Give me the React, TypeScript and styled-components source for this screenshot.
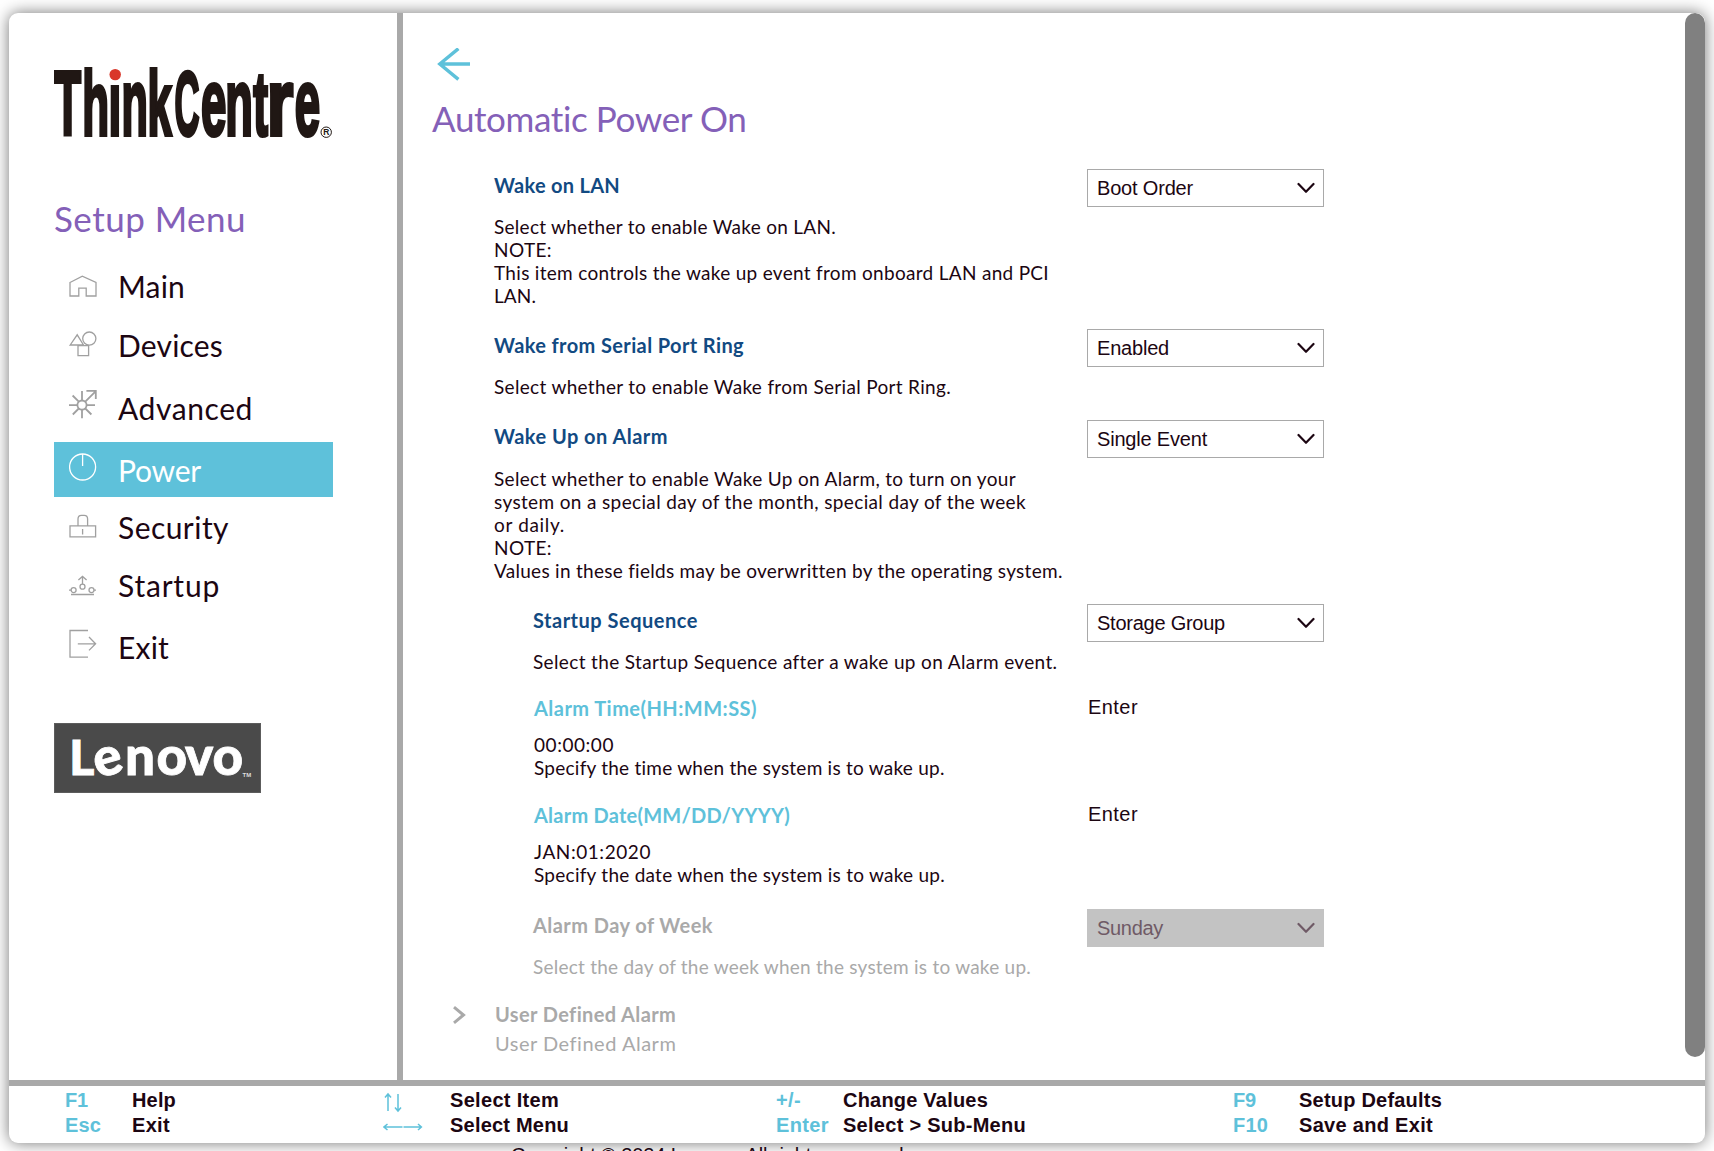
import React, { useLayoutEffect, useRef, useState } from "react";
import styled, { createGlobalStyle, css } from "styled-components";

const Global = createGlobalStyle`
  * { box-sizing: border-box; }
  html, body { margin: 0; height: 1151px; overflow: hidden; background: #fff; }
`;

const cyan = "#5ec1da";
const grey = "#a9a9a9";
const ink = "#1c0612";
const grotesk = `Lato, "Open Sans", sans-serif`;
const arial = `"Liberation Sans", Arial, sans-serif`;

/* Window frame */
const Page = styled.div`
  height: 1151px;
  padding: 13px 9px 0;
  overflow: hidden;
  font-family: ${grotesk};
  color: ${ink};
`;
const Window = styled.div`
  width: 1696px;
  height: 1130px;
  border-radius: 9px;
  background: #fff;
  box-shadow: 0 0 16px rgba(0, 0, 0, 0.55);
  display: flex;
  flex-direction: column;
  overflow: hidden;
`;
const Body = styled.div`
  display: flex;
  height: 1067px;
`;
const Sidebar = styled.aside`
  width: 394px;
  flex: none;
  border-right: 6px solid ${grey};
  padding: 46px 0 0 45px;
`;
const Content = styled.main`
  flex: 1;
  padding: 35px 0 0 29px;
`;
const ScrollTrack = styled.div`
  width: 20px;
  flex: none;
`;
const ScrollThumb = styled.div`
  height: 1044px;
  border-radius: 10px;
  background: #808080;
`;

/* Text set to a fixed measure by adjusting its tracking */
const Run = styled.span`
  display: inline-block;
  justify-self: start;
  white-space: pre;
`;
function Fit({ w, children }: { w: number; children: string }) {
  const ref = useRef<HTMLSpanElement>(null);
  const [track, setTrack] = useState(0);
  useLayoutEffect(() => {
    const natural = ref.current!.getBoundingClientRect().width;
    setTrack((w - natural) / children.length);
  }, [w, children]);
  return <Run ref={ref} style={{ letterSpacing: track }}>{children}</Run>;
}

/* Sidebar */
const BrandLogo = styled.svg`
  display: block;
  width: 285px;
  height: 90px;
`;
const MenuTitle = styled.h1`
  margin: 44px 0 0;
  height: 50px;
  font-size: 35px;
  line-height: 50px;
  font-weight: 400;
  color: #8460b8;
`;
const Nav = styled.nav`
  width: 279px;
  margin-top: 15px;
`;
const NavItem = styled.a<{ $h: number; $on?: boolean }>`
  display: flex;
  align-items: center;
  height: ${(p) => p.$h}px;
  padding-left: 15px;
  gap: 19px;
  font-size: 30px;
  line-height: 36px;
  ${(p) => p.$on && css`background: ${cyan}; color: #fff;`}
`;
const NavLabel = styled.span<{ $on?: boolean }>`
  padding-bottom: ${(p) => (p.$on ? 0 : 2)}px;
`;
const NavIcon = styled.svg<{ $lift: number; $on?: boolean }>`
  width: 30px;
  height: 30px;
  flex: none;
  margin-bottom: ${(p) => p.$lift * 2}px;
  fill: none;
  stroke: ${(p) => (p.$on ? "#fff" : "#a0a0a0")};
  stroke-width: 1.3;
`;
const LenovoBadge = styled.svg`
  display: block;
  width: 207px;
  height: 70px;
  margin-top: 41px;
  background: #4a4a4a;
  border: 1px solid #5c5c5c;
`;

/* Content */
const BackIcon = styled.svg`
  display: block;
  width: 34px;
  height: 34px;
  margin: 0 0 0 5px;
  fill: none;
  stroke: ${cyan};
  stroke-width: 3.4;
`;
const PageTitle = styled.h2`
  margin: 11px 0 0;
  height: 52px;
  font-size: 35px;
  line-height: 50px;
  font-weight: 400;
  color: #8460b8;
`;
const Rows = styled.div`
  display: flex;
  flex-direction: column;
  padding-top: 24px;
`;
const Row = styled.section<{ $gap?: number; $indent?: boolean }>`
  display: grid;
  grid-template-columns: ${(p) => (p.$indent ? 554 : 593)}px 237px;
  align-items: start;
  margin: ${(p) => p.$gap ?? 22}px 0 0 ${(p) => (p.$indent ? 101 : 62)}px;
`;
const Detail = styled.div<{ $nudge?: boolean }>`
  padding-left: ${(p) => (p.$nudge ? 1 : 0)}px;
`;
const Name = styled.h3<{ $tone: string; $flush?: boolean }>`
  margin: ${(p) => (p.$flush ? 0 : 3)}px 0 0;
  height: 24px;
  font-size: 20px;
  line-height: 26px;
  font-weight: 700;
  color: ${(p) => p.$tone};
`;
const Help = styled.p<{ $gap?: number; $dim?: boolean }>`
  margin: ${(p) => p.$gap ?? 19}px 0 0;
  font-size: 19px;
  line-height: 23px;
  color: ${(p) => (p.$dim ? grey : ink)};
`;
const HelpLine = styled.span`
  display: block;
  height: 23px;
`;
const Dropdown = styled.div<{ $off?: boolean }>`
  display: flex;
  align-items: center;
  justify-content: space-between;
  height: 38px;
  padding: 0 8px 0 9px;
  border: 1px solid ${(p) => (p.$off ? "#c3c3c3" : grey)};
  background: ${(p) => (p.$off ? "#c3c3c3" : "#fff")};
  color: ${(p) => (p.$off ? "#6f5a66" : ink)};
  font: 20px/36px ${arial};
`;
const Chevron = styled.svg`
  width: 18px;
  height: 12px;
  fill: none;
  stroke: currentColor;
  stroke-width: 2.2;
  stroke-linecap: round;
  stroke-linejoin: round;
`;
const EnterLink = styled.span`
  padding-left: 1px;
  font: 20px/24px ${arial};
`;
const SubMenu = styled.div`
  display: grid;
  grid-template-columns: 42px auto;
  margin: 24px 0 0 21px;
  color: ${grey};
`;
const SubArrow = styled.svg`
  width: 16px;
  height: 20px;
  margin: 3px 0 0 -1px;
  fill: none;
  stroke: ${grey};
  stroke-width: 3;
`;
const SubTitle = styled(Name)`
  line-height: 24px;
`;
const SubHelp = styled.div`
  margin-top: 5px;
  height: 24px;
  font-size: 20px;
  line-height: 24px;
`;

/* Footer */
const Footer = styled.footer`
  display: grid;
  grid-template-columns: 318px 393px 457px auto;
  height: 63px;
  border-top: 6px solid ${grey};
  padding: 2px 0 0 56px;
  font: 700 20px/25px ${arial};
`;
const Keys = styled.div<{ $key: number }>`
  display: grid;
  grid-template-columns: ${(p) => p.$key}px auto;
  grid-auto-rows: 25px;
  align-content: start;
`;
const Key = styled.span`
  color: ${cyan};
`;
const KeyArrows = styled.svg`
  width: 42px;
  height: 25px;
  fill: none;
  stroke: ${cyan};
  stroke-width: 1.5;
`;
const Copyright = styled.div`
  padding: 0 0 0 502px;
  font: 20px/24px ${arial};
`;

/* letter, x, advance, size */
const glyphs: [string, number, number, number][] = [
  ["T", 0.3, 26.8, 91], ["h", 28.2, 26.8, 91], ["i", 54.6, 12.8, 91], ["n", 67.4, 26.4, 94.5], ["k", 93.6, 24.2, 91],
  ["C", 120.6, 25, 91], ["e", 147, 25.4, 94.5], ["n", 171.2, 27.6, 94.5], ["t", 199.2, 14.8, 91], ["r", 212.8, 26.5, 94.5], ["e", 240.8, 25.4, 94.5],
];

const icons = {
  main: <path d="M1 7.5 13.3 1.2 27 7.5V21H17.2V13.2H9.8V21H1Z" transform="translate(0 3)" />,
  devices: (
    <g transform="translate(0 2)">
      <path d="M1.2 14 8.2 3.8 14.5 14Z" /><circle cx="20.3" cy="7.6" r="6.6" /><path d="M9 14.6H19.6V24.6H9Z" />
    </g>
  ),
  advanced: (
    <g strokeWidth="1.8" transform="translate(0 -.5)">
      <circle cx="13" cy="15.6" r="4.6" />
      <path d="M13 1.5V11M13 20.2V28.8M0 15.6H8.4M17.6 15.6H26M3.6 6 9.8 12.2M9.8 19 3.8 25M16.3 19 22.4 25M16.3 12.2 26.6 1.8M17.4 1.4H26.8V9.4" />
    </g>
  ),
  power: <><circle cx="13.6" cy="15" r="13" /><path d="M13.6 2V14" /></>,
  security: (
    <g transform="translate(0 2.5)">
      <path d="M1 11.4H26.6V22.4H1ZM9 11.4V4.6Q9 .8 12.4 .8H15.2Q18.6 .8 18.6 4.6V11.4M13.6 14.4V20" />
    </g>
  ),
  startup: (
    <g transform="translate(0 4.5)">
      <circle cx="13.5" cy="11.2" r="2.5" /><circle cx="4.6" cy="14.6" r="2.5" /><circle cx="22.5" cy="14.6" r="2.5" />
      <path d="M13.5 8.7V1M9.4 4.6 13.5 .9 17.6 4.6M0 14.6H2M25 14.6H27M2 19H25" />
    </g>
  ),
  exit: <path d="M19 1.5H1V28.2H19M8.8 14.8H26.4M20 8 26.6 14.8 20 21.4" />,
};

const nav: { icon: keyof typeof icons; label: string; h: number; lift: number; w: number; on?: boolean }[] = [
  { icon: "main", label: "Main", h: 58, lift: 0.5, w: 67 },
  { icon: "devices", label: "Devices", h: 59, lift: 2, w: 105 },
  { icon: "advanced", label: "Advanced", h: 67, lift: 4, w: 135 },
  { icon: "power", label: "Power", h: 55, lift: 2.5, w: 83, on: true },
  { icon: "security", label: "Security", h: 61, lift: 1, w: 111 },
  { icon: "startup", label: "Startup", h: 55, lift: -0.5, w: 102 },
  { icon: "exit", label: "Exit", h: 69, lift: 3.5, w: 51 },
];

type Line = [string, number];
interface Setting {
  name: Line;
  help: Line[];
  value?: Line;
  indent?: boolean;
  off?: boolean;
  gap?: number;
  helpGap?: number;
}
const settings: Setting[] = [
  {
    name: ["Wake on LAN", 126], gap: 0, value: ["Boot Order", 96],
    help: [["Select whether to enable Wake on LAN.", 342], ["NOTE:", 58], ["This item controls the wake up event from onboard LAN and PCI", 555], ["LAN.", 42]],
  },
  { name: ["Wake from Serial Port Ring", 250], value: ["Enabled", 72], help: [["Select whether to enable Wake from Serial Port Ring.", 457]] },
  {
    name: ["Wake Up on Alarm", 174], value: ["Single Event", 110], helpGap: 20,
    help: [["Select whether to enable Wake Up on Alarm, to turn on your", 522], ["system on a special day of the month, special day of the week", 532], ["or daily.", 71], ["NOTE:", 58], ["Values in these fields may be overwritten by the operating system.", 568]],
  },
  { name: ["Startup Sequence", 165], indent: true, value: ["Storage Group", 128], help: [["Select the Startup Sequence after a wake up on Alarm event.", 524]] },
  { name: ["Alarm Time(HH:MM:SS)", 223], indent: true, helpGap: 14, help: [["00:00:00", 80], ["Specify the time when the system is to wake up.", 411]] },
  { name: ["Alarm Date(MM/DD/YYYY)", 256], indent: true, gap: 23, helpGap: 14, help: [["JAN:01:2020", 117], ["Specify the date when the system is to wake up.", 411]] },
  { name: ["Alarm Day of Week", 180], indent: true, off: true, gap: 23, value: ["Sunday", 66], help: [["Select the day of the week when the system is to wake up.", 498]] },
];

function SettingRow({ s }: { s: Setting }) {
  const tone = s.off ? grey : s.value ? "#124a82" : cyan;
  return (
    <Row $gap={s.gap} $indent={s.indent}>
      <Detail $nudge={!s.value}>
        <Name $tone={tone} $flush={!s.value}><Fit w={s.name[1]}>{s.name[0]}</Fit></Name>
        <Help $gap={s.helpGap} $dim={s.off}>
          {s.help.map(([t, w]) => <HelpLine key={t}><Fit w={w}>{t}</Fit></HelpLine>)}
        </Help>
      </Detail>
      {s.value ? (
        <Dropdown $off={s.off}>
          <Fit w={s.value[1]}>{s.value[0]}</Fit>
          <Chevron viewBox="0 0 18 12"><path d="M1.5 2 9 9.8 16.5 2" /></Chevron>
        </Dropdown>
      ) : (
        <EnterLink><Fit w={50}>Enter</Fit></EnterLink>
      )}
    </Row>
  );
}

export default function App() {
  return (
    <Page>
      <Global />
      <Window>
        <Body>
          <Sidebar>
            <BrandLogo viewBox="0 0 285 90">
              <text y="75.7" fontFamily={arial} fontWeight="700" fill="#201714" stroke="#201714" strokeWidth="4">
                {glyphs.map(([c, x, w, size], i) => (
                  <tspan key={i} x={x} fontSize={size} textLength={w} lengthAdjust="spacingAndGlyphs">{c}</tspan>
                ))}
              </text>
              <rect x="54.8" y="5" width="12.8" height="19" fill="#fff" />
              <circle cx="61.2" cy="15.6" r="5.7" fill="#d9372a" />
              <circle cx="272.2" cy="73.2" r="5.2" fill="none" stroke="#201714" strokeWidth="1" />
              <text x="269.3" y="76.4" fontFamily={arial} fontWeight="700" fontSize="8.5" fill="#201714">R</text>
            </BrandLogo>
            <MenuTitle><Fit w={192}>Setup Menu</Fit></MenuTitle>
            <Nav>
              {nav.map((n) => (
                <NavItem key={n.label} $h={n.h} $on={n.on}>
                  <NavIcon viewBox="0 0 30 30" $lift={n.lift} $on={n.on}>{icons[n.icon]}</NavIcon>
                  <NavLabel $on={n.on}><Fit w={n.w}>{n.label}</Fit></NavLabel>
                </NavItem>
              ))}
            </Nav>
            <LenovoBadge viewBox="1 1 205 68">
              <text y="52" fontFamily="Lato, sans-serif" fontWeight="900" fontSize="53" fill="#fff" stroke="#fff" strokeWidth=".8">
                <tspan x="15.2" fontSize="48">L</tspan>
                <tspan x="44" y="55.5" rotate="-16">e</tspan>
                <tspan x="71" y="52">n</tspan>
                <tspan x="102.5">o</tspan>
                <tspan x="131">v</tspan>
                <tspan x="158.5">o</tspan>
              </text>
              <text x="188.5" y="53.5" fontFamily={arial} fontSize="6" fontWeight="700" fill="#ddd">TM</text>
            </LenovoBadge>
          </Sidebar>
          <Content>
            <BackIcon viewBox="0 0 34 34"><path d="M33 16H2.6M21.4 .6 2.8 16 21.4 31.4" /></BackIcon>
            <PageTitle><Fit w={315}>Automatic Power On</Fit></PageTitle>
            <Rows>
              {settings.map((s) => <SettingRow key={s.name[0]} s={s} />)}
              <SubMenu>
                <SubArrow viewBox="0 0 16 20"><path d="M2 2.2 11.5 10 2 17.8" /></SubArrow>
                <div>
                  <SubTitle $tone={grey} $flush><Fit w={181}>User Defined Alarm</Fit></SubTitle>
                  <SubHelp><Fit w={181}>User Defined Alarm</Fit></SubHelp>
                </div>
              </SubMenu>
            </Rows>
          </Content>
          <ScrollTrack><ScrollThumb /></ScrollTrack>
        </Body>
        <Footer>
          <Keys $key={67}>
            <Key><Fit w={23}>F1</Fit></Key><Fit w={44}>Help</Fit>
            <Key><Fit w={36}>Esc</Fit></Key><Fit w={38}>Exit</Fit>
          </Keys>
          <Keys $key={67}>
            <KeyArrows viewBox="0 0 42 25"><path d="M5 23V6M2 9.5 5 6 8 9.5M15 6V23M12 19.5 15 23 18 19.5" /></KeyArrows><Fit w={109}>Select Item</Fit>
            <KeyArrows viewBox="0 0 42 25"><path d="M1 14H19.5M4.5 11 1 14 4.5 17M20.5 14H38.4M35 11 38.4 14 35 17" /></KeyArrows><Fit w={119}>Select Menu</Fit>
          </Keys>
          <Keys $key={67}>
            <Key><Fit w={25}>+/-</Fit></Key><Fit w={145}>Change Values</Fit>
            <Key><Fit w={53}>Enter</Fit></Key><Fit w={183}>{"Select > Sub-Menu"}</Fit>
          </Keys>
          <Keys $key={66}>
            <Key><Fit w={23}>F9</Fit></Key><Fit w={143}>Setup Defaults</Fit>
            <Key><Fit w={35}>F10</Fit></Key><Fit w={134}>Save and Exit</Fit>
          </Keys>
        </Footer>
      </Window>
      <Copyright><Fit w={398}>Copyright © 2024 Lenovo. All rights reserved.</Fit></Copyright>
    </Page>
  );
}
